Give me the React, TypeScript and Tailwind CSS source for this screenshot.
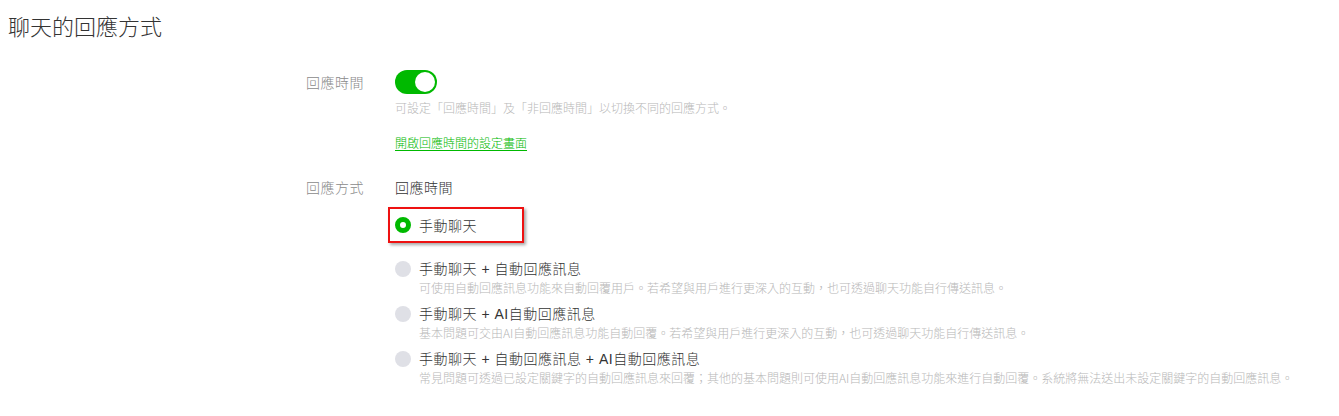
import React from "react";

const font = { fontFamily: '"Noto Sans CJK TC", "Noto Sans", sans-serif' };
const labelFont = { fontFamily: '"Liberation Sans", "Noto Sans CJK TC", sans-serif' };

function Radio({ checked }: { checked?: boolean }) {
  return checked ? (
    <span className="block w-[16px] h-[16px] rounded-full border-[5px] border-[#00b900] bg-white shrink-0" />
  ) : (
    <span className="block w-[16px] h-[16px] rounded-full bg-[#dfe0e6] shrink-0" />
  );
}

function Option({ label, desc }: { label: string; desc: string }) {
  return (
    <div className="mt-[7px] first:mt-[16px]">
      <div className="flex items-center gap-[8px] h-[20px]">
        <Radio />
        <span className="text-[14px] leading-[20px] tracking-[0.5px] text-[#333]" style={labelFont}>
          {label}
        </span>
      </div>
      <div className="pl-[24px] text-[12px] leading-[18px] text-[#b8b8b8] whitespace-nowrap">{desc}</div>
    </div>
  );
}

export default function App() {
  return (
    <div className="w-[1339px] h-[416px] bg-white overflow-hidden font-light" style={font}>
      <div className="pl-[8px] pt-[9px] text-[22px] leading-[32px] text-[#333]">聊天的回應方式</div>
      <div className="pl-[306px] mt-[29px]">
        <div className="flex">
          <div className="w-[89px] text-[14px] leading-[24px] tracking-[0.5px] text-[#8a8a8a]">回應時間</div>
          <div className="flex flex-col">
            <div className="w-[42px] h-[24px] rounded-full bg-[#00b900] p-[2px] flex justify-end">
              <span className="block w-[20px] h-[20px] rounded-full bg-white" />
            </div>
            <div className="mt-[5px] text-[12px] leading-[18px] text-[#b8b8b8]">
              可設定「回應時間」及「非回應時間」以切換不同的回應方式。
            </div>
            <a className="mt-[17px] text-[12px] leading-[18px] text-[#00b900] underline underline-offset-2 w-fit" href="#">
              開啟回應時間的設定畫面
            </a>
          </div>
        </div>
        <div className="flex mt-[25px]">
          <div className="w-[89px] text-[14px] leading-[20px] tracking-[0.5px] text-[#8a8a8a]">回應方式</div>
          <div className="flex flex-col">
            <div className="text-[14px] leading-[20px] tracking-[0.5px] text-[#333]">回應時間</div>
            <div className="relative mt-[10px] h-[36px] flex items-center gap-[8px]">
              <Radio checked />
              <span className="text-[14px] leading-[20px] tracking-[0.5px] text-[#333]">手動聊天</span>
              <div className="absolute left-[-7px] top-0 w-[136px] h-[36px] border-2 border-[#ee1111] shadow-[2px_2px_3px_rgba(0,0,0,0.35)]" />
            </div>
            <div className="flex flex-col">
              <Option
                label="手動聊天 + 自動回應訊息"
                desc="可使用自動回應訊息功能來自動回覆用戶。若希望與用戶進行更深入的互動，也可透過聊天功能自行傳送訊息。"
              />
              <Option
                label="手動聊天 + AI自動回應訊息"
                desc="基本問題可交由AI自動回應訊息功能自動回覆。若希望與用戶進行更深入的互動，也可透過聊天功能自行傳送訊息。"
              />
              <Option
                label="手動聊天 + 自動回應訊息 + AI自動回應訊息"
                desc="常見問題可透過已設定關鍵字的自動回應訊息來回覆；其他的基本問題則可使用AI自動回應訊息功能來進行自動回覆。系統將無法送出未設定關鍵字的自動回應訊息。"
              />
            </div>
          </div>
        </div>
      </div>
    </div>
  );
}
